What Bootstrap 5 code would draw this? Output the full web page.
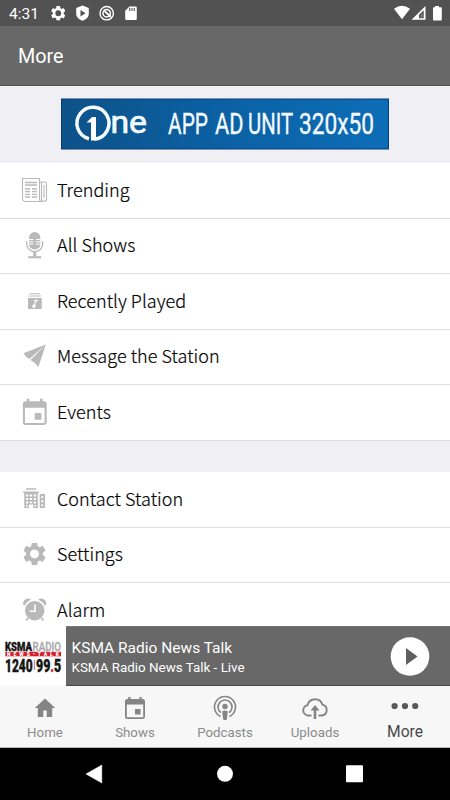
<!DOCTYPE html>
<html lang="en">
<head>
<meta charset="utf-8">
<meta name="viewport" content="width=device-width, initial-scale=1">
<title>More</title>
<link href="https://cdn.jsdelivr.net/npm/bootstrap@5.3.0/dist/css/bootstrap.min.css" rel="stylesheet">
<style>
body{font-family:Roboto,"Liberation Sans",sans-serif;width:450px;height:800px;background:#efeff4}
svg{display:block;flex:none}
.status{height:26px;background:#525252;padding-left:9px;font-size:15.500px;line-height:28px}
.status svg{left:38px}
.titlebar{height:60px;background:#686868;border-bottom:1px solid #57534e;padding:2px 0 0 18px;font-size:19.800px}
.content{height:540px;background:#efeff4}
.ad{height:77px;padding:12px 0 0 61px}
.menu-row{height:55.500px;border-radius:0;border:0;border-bottom:1px solid #dededf;padding:0 0 1px 21px;color:#000;font:300 18px/28px "Noto Sans CJK JP","Noto Sans",sans-serif;letter-spacing:.06px;-webkit-text-stroke:.2px #000;background:#fff}
.menu-row svg{margin-right:8px;fill:#b9b9b9}
.menu-row span{margin-top:-2.500px}
.gap-band{height:31.500px}
.player{height:60px;background:#686868;border-top:1px solid #777;border-bottom:1px solid #484848}
.player svg:first-child{margin:-1px 0}
.track{padding:4px 0 0 5.500px}
.station{font-size:15.500px;line-height:19px}
.onair{font-size:13.400px;line-height:19px}
.tabs{height:62px;background:#f7f7f7;border-bottom:1px solid #b5b5b5;color:#8b8b8b;font-size:13.300px}
.tabs .tab{width:90px;padding-top:9px}
.tabs svg{fill:#858585;margin-bottom:4px}
.tabs span{line-height:20px}
.tabs .current{color:#484848;font-size:15.600px}
.tabs .current span{line-height:18px}
.tabs .current svg{fill:#585858}
.sysnav{height:52px;background:#000}
</style>
<script src="https://cdn.jsdelivr.net/npm/bootstrap@5.3.0/dist/js/bootstrap.bundle.min.js"></script>
</head>
<body class="overflow-hidden">
<svg width="0" height="0" class="position-absolute">
<symbol id="gear" viewBox="2 2 20 20"><path d="M19.43 12.98c.04-.32.07-.64.07-.98s-.03-.66-.07-.98l2.11-1.65c.19-.15.24-.42.12-.64l-2-3.46c-.12-.22-.39-.3-.61-.22l-2.49 1c-.52-.4-1.08-.73-1.69-.98l-.38-2.65C14.46 2.18 14.25 2 14 2h-4c-.25 0-.46.18-.49.42l-.38 2.65c-.61.25-1.17.59-1.69.98l-2.49-1c-.23-.09-.49 0-.61.22l-2 3.46c-.13.22-.07.49.12.64l2.11 1.65c-.04.32-.07.65-.07.98s.03.66.07.98l-2.11 1.65c-.19.15-.24.42-.12.64l2 3.46c.12.22.39.3.61.22l2.49-1c.52.4 1.08.73 1.69.98l.38 2.65c.03.24.24.42.49.42h4c.25 0 .46-.18.49-.42l.38-2.65c.61-.25 1.17-.59 1.69-.98l2.49 1c.23.09.49 0 .61-.22l2-3.46c.12-.22.07-.49-.12-.64l-2.11-1.65zM12 16a4 4 0 1 1 0-8 4 4 0 0 1 0 8z"/></symbol>
<symbol id="calendar" viewBox="3 1 18 20"><path d="M17 12h-5v5h5v-5zM16 1v2H8V1H6v2H5c-1.110 0-2 .9-2 2v14a2 2 0 0 0 2 2h14c1.100 0 2-.9 2-2V5c0-1.100-.9-2-2-2h-1V1h-2zm3.400 18.500H4.600V8h14.800v11.500z"/></symbol>
</svg>

<div class="status d-flex text-white">
 <span>4:31</span>
 <svg class="position-absolute" width="412" height="26" viewBox="38 0 412 26" fill="#fff">
  <use href="#gear" x="51" y="6" width="14.500" height="14.500"/>
  <path d="M82.500 5.500l6.300 2.500v5.500c0 3.500-2.500 6-6.300 7.300-3.800-1.300-6.300-3.800-6.300-7.300V8z"/><path d="M80.500 10v6.500l5-3.200z" fill="#525252"/>
  <circle cx="106.700" cy="13.200" r="6.700" fill="none" stroke="#fff" stroke-width="1.400"/><circle cx="106.700" cy="13.200" r="3.700" fill="none" stroke="#fff" stroke-width="1.500"/><path d="M104.500 11l6.500 6" stroke="#fff" stroke-width="1.800"/>
  <path d="M129.500 6.500h6q1.300 0 1.300 1.300v11q0 1.200-1.300 1.200h-9q-1.300 0-1.300-1.200v-8z"/><path d="M129.700 8v3M132 8v3M134.300 8v3" stroke="#525252" stroke-width="1.100"/>
  <path d="M394 8.700q8-6 16 0l-8 10.500z"/>
  <path fill-rule="evenodd" d="M411.500 19.800L425.500 6v13.800zM419 18.200h4.700v-8L419 14.800z"/><path d="M420.500 15l1.800-1.800v4h-1.800z" opacity=".3"/>
  <path d="M435 6h4v1.300h2q.8 0 .8.800v11.500q0 .9-.8.900h-7.200q-.8 0-.8-.9V8.100q0-.8.800-.8h1.200z"/>
 </svg>
</div>
<header class="titlebar d-flex align-items-center text-white">More</header>

<main class="content overflow-hidden">
 <div class="ad">
  <svg width="328" height="52" viewBox="0 0 328 52">
   <defs><linearGradient id="blue"><stop offset="0" stop-color="#0d5289"/><stop offset=".5" stop-color="#0b61a4"/><stop offset="1" stop-color="#0c6db7"/></linearGradient></defs>
   <rect x=".5" y="1" width="327" height="50" fill="url(#blue)" stroke="#063b80"/>
   <path d="M27.300 40.800A16 16 0 1 1 33 41.200" transform="translate(.7 0)" fill="none" stroke="#f4faff" stroke-width="3.500"/>
   <path d="M26 24l5-5h4v23.500h-5V24.500h-4z" fill="#fff"/>
   <g fill="#f4faff" stroke="#f4faff" stroke-width=".35" font-family="Roboto,sans-serif">
    <text x="49.500" y="35" font-size="32" stroke-width=".7" textLength="36.500" lengthAdjust="spacingAndGlyphs">ne</text>
    <g font-size="29">
     <text x="107" y="36.300" textLength="40" lengthAdjust="spacingAndGlyphs">APP</text>
     <text x="154" y="36.300" textLength="28.500" lengthAdjust="spacingAndGlyphs">AD</text>
     <text x="187" y="36.300" textLength="45" lengthAdjust="spacingAndGlyphs">UNIT</text>
     <text x="238" y="36.300" textLength="75" lengthAdjust="spacingAndGlyphs">320x50</text>
    </g>
   </g>
  </svg>
 </div>
 <div class="list-group rounded-0">
  <a class="list-group-item menu-row d-flex align-items-center" href="#"><svg width="28" height="28" viewBox="0 0 28 28"><g fill="none" stroke="#b9b9b9" stroke-width="1.100"><path d="M1.500 2.500h17v20.500q0 2.500 2.500 2.500H5q-3.500 0-3.500-3.500zM18.500 6h5q2 0 2 2v14.500q0 3-2.500 3t-2.500-3V6"/><path d="M23 9v13"/><path d="M4 6.500h12M4 9h12" stroke-width="1.300"/><path d="M4 13h5M11 13h5M4 15.700h5M11 15.700h5M4 18.400h5M11 18.400h5M4 21h5M11 21h5" stroke-width="1.300"/></g></svg><span>Trending</span></a>
  <a class="list-group-item menu-row d-flex align-items-center" href="#"><svg width="28" height="28" viewBox="0 0 28 28"><path d="M8 7a5.700 6 0 0 1 11.400 0v1H15v1h4.400v1.300H15v1h4.400v1.200H15v1h4.400a5.700 5 0 0 1-11.400 0h4.400v-1H8v-1.200h4.400v-1H8V9h4.400V8H8z"/><path d="M5.800 10v3a7.900 7.700 0 0 0 15.800 0v-3M13.700 20.800v4.500" fill="none" stroke="#b9b9b9" stroke-width="1.300"/><path d="M12.200 21h3v4.200h5v2H7.200v-2h5z"/></svg><span>All Shows</span></a>
  <a class="list-group-item menu-row d-flex align-items-center" href="#"><svg width="28" height="28" viewBox="0 0 28 28"><path d="M8.500 6.200h10.500v1H8.500zM7.500 8.500h12.500v1.100H7.500z"/><path fill-rule="evenodd" d="M7.800 11H20q.8 0 .8.800v9.400q0 .8-.8.800H7.800q-.8 0-.8-.8v-9.400q0-.8.800-.8zm5.700 1.700v5.100a1.700 1.700 0 1 0 1.100 1.500v-4.800h2.200v-1.800z"/></svg><span>Recently Played</span></a>
  <a class="list-group-item menu-row d-flex align-items-center" href="#"><svg width="28" height="28" viewBox="0 0 28 28"><path d="M24.800 2.500L2.500 11.300q2 4 6 5.700zM24.800 2.500L9.500 18q4 2 7.900 7z"/></svg><span>Message the Station</span></a>
  <a class="list-group-item menu-row d-flex align-items-center" href="#"><svg width="28" height="28" viewBox="0 0 28 28"><use href="#calendar" x="1.500" y=".5" width="24.500" height="26.500"/></svg><span>Events</span></a>
 </div>
 <div class="gap-band"></div>
 <div class="list-group rounded-0">
  <a class="list-group-item menu-row d-flex align-items-center" href="#"><svg width="28" height="28" viewBox="0 0 28 28"><path fill-rule="evenodd" d="M5 3.300h10v1.500H5zM2.300 6.500h15.500V8.300h-1V23h-4.500v-3.500H8V23H3.300V8.300h-1zM5 9.500v2h2.300v-2zm3.800 0v2h2.400v-2zm4 0v2H15v-2zM5 13v2h2.300v-2zm3.800 0v2h2.400v-2zm4 0v2H15v-2zM5 16.500v2h2.300v-2zm3.800 0v1.700h2.400v-1.700zm4 0v2H15v-2zM5 20v1.700h1.700V20zm8.700 0v1.700H15V20zM18.700 9h5.300v14h-5.300zm1.600 2.300v2h2v-2zm0 4v2h2v-2zm0 4v2h2v-2z"/></svg><span>Contact Station</span></a>
  <a class="list-group-item menu-row d-flex align-items-center" href="#"><svg width="28" height="28" viewBox="0 0 28 28"><use href="#gear" x="2.300" y="2.700" width="22.400" height="22.400"/></svg><span>Settings</span></a>
  <a class="list-group-item menu-row d-flex align-items-center" href="#"><svg width="28" height="28" viewBox="0 0 28 28"><circle cx="13.700" cy="14.700" r="9.700"/><path d="M2.400 9a5 5 0 0 1 7.800-5.300q-4.500 1.500-6.800 6.200zM25 9a5 5 0 0 0-7.800-5.300q4.500 1.500 6.800 6.200z"/><path d="M7 22l-1.800 2.500M20.500 22l1.800 2.500" stroke="#b9b9b9" stroke-width="1.800"/><path d="M14 8.500v6.700H8.700" fill="none" stroke="#fff" stroke-width="1.600"/></svg><span>Alarm</span></a>
 </div>
</main>

<section class="player d-flex align-items-center text-white">
 <svg width="66" height="60" viewBox="0 0 66 60">
  <rect width="66" height="60" fill="#fff"/>
  <g font-family="Roboto,sans-serif" font-weight="900">
   <text x="5" y="24.600" font-size="12.500" textLength="27" lengthAdjust="spacingAndGlyphs" fill="#151515" stroke="#151515" stroke-width=".4">KSMA</text>
   <text x="32.600" y="24.600" font-size="12.500" font-weight="500" textLength="28.500" lengthAdjust="spacingAndGlyphs" fill="#a8a8ac" stroke="#a8a8ac" stroke-width=".3">RADIO</text>
   <rect x="5.300" y="25.800" width="55.700" height="4.500" fill="#d5202b"/>
   <text x="7" y="29.900" font-size="5" textLength="52" fill="#fff">NEWS•TALK</text>
   <g fill="#151515" stroke="#151515" stroke-width=".4">
   <text x="5" y="46.400" font-size="18.500" textLength="27.700" lengthAdjust="spacingAndGlyphs">1240</text>
   <text x="36" y="46.400" font-size="18.500" textLength="25.300" lengthAdjust="spacingAndGlyphs">99<tspan fill="#d5202b" stroke="#d5202b">.</tspan>5</text>
   </g>
   <path d="M34.300 34v10" stroke="#d5202b" stroke-width=".7"/>
  </g>
 </svg>
 <div class="track flex-grow-1">
  <div class="station">KSMA Radio News Talk</div>
  <div class="onair">KSMA Radio News Talk - Live</div>
 </div>
 <svg class="me-3" width="48" height="40" viewBox="0 0 48 40"><circle cx="24" cy="20.500" r="19.300" fill="#fff"/><path d="M20 12v17L31.500 20.500z" fill="#5f5f5f"/></svg>
</section>

<nav class="tabs d-flex">
 <div class="tab d-flex flex-column align-items-center"><svg width="28" height="24" viewBox="0 0 28 24"><path d="M14 3.500L3.800 13h3v9h5.500v-6.500h3.400V22h5.500v-9h3z"/></svg><span>Home</span></div>
 <div class="tab d-flex flex-column align-items-center"><svg width="28" height="24" viewBox="0 0 28 24"><use href="#calendar" x="4" y="1.700" width="20" height="22.300"/></svg><span>Shows</span></div>
 <div class="tab d-flex flex-column align-items-center"><svg class="overflow-visible" width="28" height="24" viewBox="0 0 28 24"><g fill="none" stroke="#858585" stroke-width="1.600"><path d="M9.500 21.500a10.500 10.500 0 1 1 9 0"/><path d="M9.900 17.700a7 7 0 1 1 8.200 0"/></g><circle cx="14" cy="11.500" r="2.700"/><path d="M11.200 16.500q2.800-2 5.600 0l-1 8q-1.800 1.500-3.600 0z"/></svg><span>Podcasts</span></div>
 <div class="tab d-flex flex-column align-items-center"><svg width="28" height="24" viewBox="0 0 28 24"><path d="M10.500 20.500H7a5.200 5.200 0 0 1-.5-10.300 7.800 7.800 0 0 1 15-.5 5.500 5.500 0 0 1-.7 10.800h-3.300" fill="none" stroke="#858585" stroke-width="1.900"/><path d="M14 10l4.500 5.500h-3.200v8.500h-2.600v-8.500H9.500z"/></svg><span>Uploads</span></div>
 <div class="tab current d-flex flex-column align-items-center"><svg width="28" height="24" viewBox="0 0 28 24"><circle cx="3.600" cy="11" r="3.100"/><circle cx="14" cy="11" r="3.100"/><circle cx="24.200" cy="11" r="3.100"/></svg><span>More</span></div>
</nav>
<footer class="sysnav"><svg width="450" height="52" fill="#fff"><path d="M86 26l15.800-9v18z" stroke="#fff" stroke-width=".5"/><circle cx="225" cy="25.800" r="8"/><rect x="346" y="17.200" width="17" height="17" rx="1"/></svg></footer>
</body>
</html>
